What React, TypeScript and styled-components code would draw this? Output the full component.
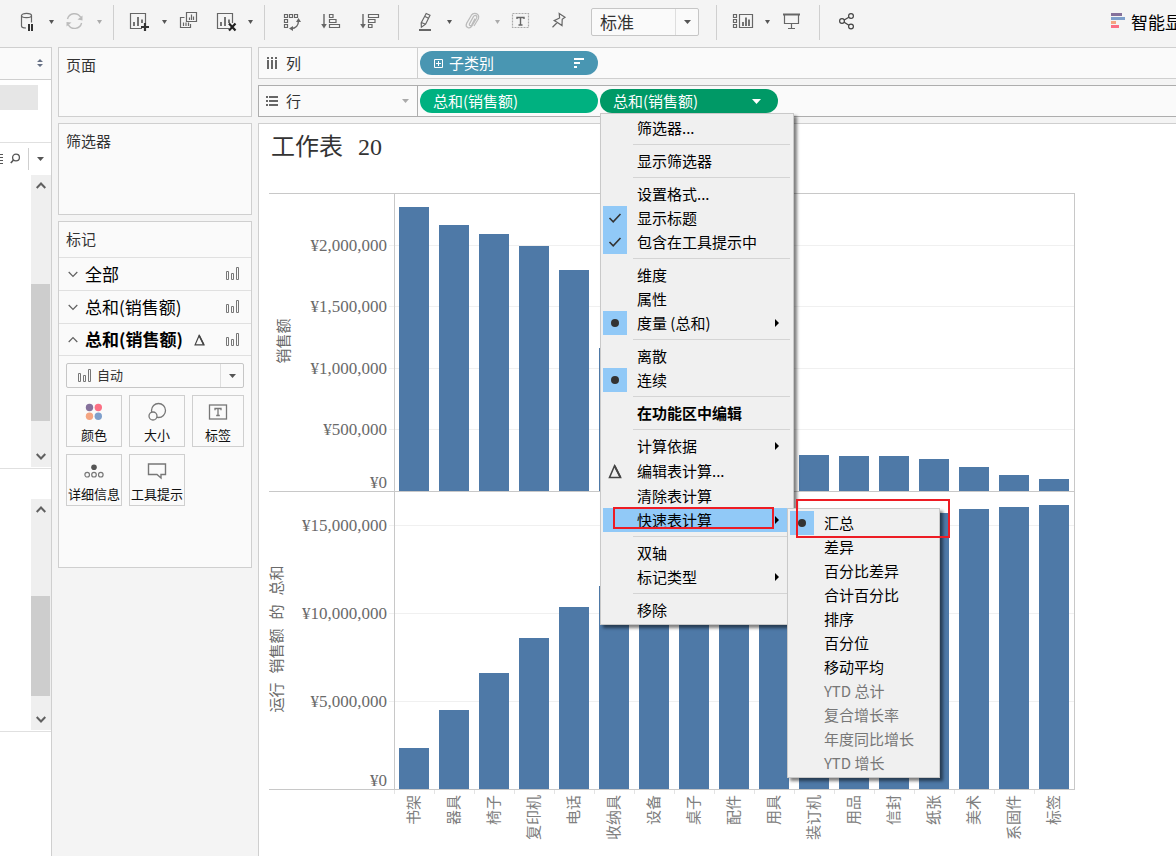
import React from "react";
import styled, { createGlobalStyle, css } from "styled-components";

const GlobalStyle = createGlobalStyle`
  * { box-sizing: border-box; }
  body {
    margin: 0;
    background: #f4f4f4;
    color: #333;
    font-family: "Noto Sans CJK SC", "Noto Sans", sans-serif;
    font-size: 15px;
  }
  button { font: inherit; color: inherit; background: none; border: 0; padding: 0; margin: 0; }
  svg { display: block; flex: none; }
`;

const Page = styled.div`
  display: flex;
  flex-direction: column;
  min-height: 100vh;
  overflow: hidden;
`;

/* ---------- Toolbar ---------- */

const Toolbar = styled.header`
  display: flex;
  align-items: center;
  height: 47px;
  padding: 0 0 3px 8px;
  overflow: hidden;
  white-space: nowrap;
`;

const ToolGroup = styled.div<{ $slot?: number }>`
  display: flex;
  align-items: center;
  flex: none;
  --slot: ${(p) => p.$slot ?? 38}px;
`;

const Tool = styled.button`
  display: grid;
  place-items: center;
  width: var(--slot);
  height: 28px;
`;

const CaretTool = styled.button`
  display: grid;
  place-items: center;
  width: 10px;
  height: 28px;
`;

const Separator = styled.div`
  flex: none;
  width: 1px;
  height: 35px;
  margin: 0 7px 0 9px;
  background: #cfcfcf;
`;

const SelectBox = styled.div<{ $arrow: number }>`
  position: relative;
  display: flex;
  background: #fafafa;
  border: 1px solid #c6c6c6;
  border-radius: 2px;
  select {
    appearance: none;
    width: 100%;
    border: 0;
    outline: 0;
    background: transparent;
    color: #333;
    font: inherit;
  }
  &::after {
    content: "";
    position: absolute;
    right: ${(p) => p.$arrow}px;
    top: 0;
    bottom: 0;
    border-left: 1px solid #dedede;
  }
  > svg {
    position: absolute;
    pointer-events: none;
  }
  > svg:last-child {
    right: ${(p) => p.$arrow / 2 - 4}px;
    top: 50%;
    margin-top: -2px;
  }
`;

const FitSelect = styled(SelectBox)`
  flex: none;
  width: 108px;
  height: 28px;
  margin: 0 8px 0 13px;
  font-size: 17px;
  select { padding: 0 24px 2px 8px; }
`;

const ShowMe = styled.button`
  display: flex;
  align-items: center;
  gap: 6px;
  flex: none;
  margin-left: 246px;
  padding-bottom: 2px;
  font-size: 17px;
  color: #000;
`;

const Caret = ({ color = "#555", w = 7 }: { color?: string; w?: number }) => (
  <svg width={w} height="4" viewBox="0 0 8 4" preserveAspectRatio="none">
    <path d="M0 0H8L4 4Z" fill={color} />
  </svg>
);

const Icon = ({ children, color = "#666" }: { children: React.ReactNode; color?: string }) => (
  <svg width="24" height="24" viewBox="0 0 24 24" fill="none" stroke={color} strokeWidth="1.2">
    {children}
  </svg>
);

const DataSourceIcon = () => (
  <Icon>
    <ellipse cx="11.5" cy="5.5" rx="5" ry="2.2" />
    <path d="M6.5 5.5V16C6.5 17.4 8.5 18 11 18M16.5 5.5V12.5" />
    <path d="M14 14V21M17 14V21" stroke="#333" strokeWidth="2" />
  </Icon>
);

const RefreshIcon = () => (
  <Icon color="#bbb">
    <path d="M4.5 9A7.2 7.2 0 0 1 17.6 7.2M18.6 13A7.2 7.2 0 0 1 5.4 14.8" strokeWidth="1.4" />
    <path d="M19.5 5.5V10.5L14.5 9.5ZM3.5 16.5V12L8.5 12.5Z" fill="#bbb" stroke="none" />
  </Icon>
);

const SheetFrame = () => (
  <>
    <path d="M14 18.5H2.5V3.5H17.5V13" />
    <path d="M6 16V12M10 16V7M14 13V9.5" strokeWidth="1.8" />
  </>
);

const NewSheetIcon = () => (
  <Icon>
    <SheetFrame />
    <path d="M17 13V21M13 17H21" stroke="#333" strokeWidth="2.2" />
  </Icon>
);

const ClearSheetIcon = () => (
  <Icon>
    <g transform="translate(1 0)"><SheetFrame /></g>
    <path d="M15 13.5L21.5 20.5M21.5 13.5L15 20.5" stroke="#222" strokeWidth="2.2" />
  </Icon>
);

const DuplicateIcon = () => (
  <Icon>
    <path d="M10.5 2.5H20.5V11.5H10.5Z" />
    <path d="M8.5 7.5H4.5V17.5H14.5V14" />
    <path d="M13.5 10V7.5M15.5 10V4.5M17.5 10V6.5M7.5 16V12.5M10 16V12.5M12.5 16V12.5" />
  </Icon>
);

const SwapIcon = () => (
  <Icon>
    <path d="M4.5 4.5H7.5V7.5H4.5ZM9.5 4.5H12.5V7.5H9.5ZM14.5 4.5H17.5V7.5H14.5ZM4.5 9.5H7.5V12.5H4.5ZM4.5 14.5H7.5V17.5H4.5Z" />
    <path d="M18.5 10.5C18.5 15 16 18.5 11 18.5" strokeWidth="1.4" />
    <path d="M18.5 8L21 12H16ZM9 18.5L13 16V21Z" fill="#666" stroke="none" />
  </Icon>
);

const SortArrow = () => (
  <>
    <path d="M5 4V16" strokeWidth="1.4" />
    <path d="M2.2 14H7.8L5 18.5Z" fill="#666" stroke="none" />
  </>
);

const SortAscIcon = () => (
  <Icon>
    <SortArrow />
    <path d="M10.5 4.5H14V7.5H10.5ZM10.5 9.5H17V12.5H10.5ZM10.5 14.5H20.5V17.5H10.5Z" />
  </Icon>
);

const SortDescIcon = () => (
  <Icon>
    <SortArrow />
    <path d="M10.5 4.5H20.5V7.5H10.5ZM10.5 9.5H17V12.5H10.5ZM10.5 14.5H14V17.5H10.5Z" />
  </Icon>
);

const HighlightIcon = () => (
  <Icon>
    <path d="M13.2 3.5L17 5.2L12.6 14.2L8.4 17.2L8.2 12.8ZM12 6.5L15.6 8.2M8.3 12.5L12.6 14.3" />
    <path d="M6 20H18" strokeWidth="2" />
  </Icon>
);

const ClipIcon = () => (
  <Icon color="#bbb">
    <path d="M8.6 13.6L12.4 6.6C13.8 4.2 16.8 5.8 15.6 8.2L10.8 16.2C8.6 19.6 3.8 17.2 5.6 13.4L10.4 5.2C12.6 1.8 19 3.2 17.4 8.8L13 16M8.6 13.6C7.6 15.6 9.8 16.4 10.8 14.8L14 8.6" />
  </Icon>
);

const TextBoxIcon = () => (
  <Icon>
    <rect x="3.5" y="3.5" width="16" height="14" stroke="#aaa" strokeDasharray="2 1" />
    <path d="M8 9V7.5H15V9M11.5 7.5V15M9.5 15H13.5" strokeWidth="1.4" />
  </Icon>
);

const PinIcon = () => (
  <Icon>
    <path d="M12.2 3.5L18 7.2L15.2 9.2L15 15.6L11.2 13L7.2 10.6L12.6 8ZM10 12.8L5.5 17.2" />
  </Icon>
);

const CardsIcon = () => (
  <Icon>
    <path d="M2.5 4.5H5.5V7.5H2.5ZM2.5 9.5H5.5V12.5H2.5ZM2.5 14.5H5.5V17.5H2.5ZM8.5 4.5H21.5V17.5H8.5Z" />
    <path d="M12 16V12M15 16V7.5M18 16V9.5" strokeWidth="1.8" />
  </Icon>
);

const PresentIcon = () => (
  <Icon>
    <path d="M4 4.5H21" strokeWidth="2" />
    <path d="M5.5 5V13.5H19.5V5M12.5 13.5V18.5M9 18.5H16" />
  </Icon>
);

const ShareIcon = () => (
  <Icon color="#444">
    <circle cx="8" cy="11" r="2.4" />
    <circle cx="17" cy="6" r="2.4" />
    <circle cx="17" cy="16.5" r="2.4" />
    <path d="M10.2 9.9L14.8 7.2M10.2 12.2L14.9 15.2" />
  </Icon>
);

const ShowMeIcon = () => (
  <svg width="14" height="16" viewBox="0 0 14 16">
    <path d="M0 0H11V3H0Z" fill="#85719b" />
    <path d="M0 4H14V7H0Z" fill="#7e9fcb" />
    <path d="M0 8H5V11H0Z" fill="#f4a582" />
    <path d="M0 12H8V15H0Z" fill="#fb6f84" />
  </svg>
);

/* ---------- Data pane ---------- */

const Workspace = styled.div`
  display: flex;
  flex: 1;
`;

const DataPane = styled.aside`
  flex: none;
  display: flex;
  flex-direction: column;
  width: 52px;
  background: #fff;
  border-top: 1px solid #cfcfcf;
  border-right: 1px solid #cfcfcf;
`;

const PaneHeader = styled.div`
  display: flex;
  align-items: center;
  justify-content: flex-end;
  height: 32px;
  padding: 0 8px 2px 0;
  background: #fafafa;
  border-bottom: 1px solid #cfcfcf;
`;

const SourceList = styled.div`
  height: 63px;
  padding: 5px 13px 0 0;
  border-bottom: 1px solid #e0e0e0;
  div { height: 25px; background: #e6e6e6; }
`;

const SearchRow = styled.div`
  display: flex;
  align-items: center;
  height: 32px;
  gap: 8px;
  span { width: 1px; height: 22px; background: #cfcfcf; }
`;

const ScrollTrack = styled.div<{ $h: number }>`
  display: flex;
  flex-direction: column;
  align-items: stretch;
  width: 20px;
  height: ${(p) => p.$h}px;
  margin-left: 31px;
  padding-bottom: 1px;
  background: #efefef;
  button { display: grid; place-items: center; flex: none; height: 20px; }
`;

const Thumb = styled.div<{ $before: number; $h: number }>`
  height: ${(p) => p.$h}px;
  margin: ${(p) => p.$before}px 1px auto 0;
  background: #cdcdcd;
`;

const Rule = styled.div<{ $after?: number }>`
  height: 1px;
  margin: 1px 0 ${(p) => p.$after ?? 0}px;
  background: #e0e0e0;
`;

const Chevron = ({ up, size = 10, width = 2, color = "#606060" }: { up?: boolean; size?: number; width?: number; color?: string }) => (
  <svg width={size} height="7" viewBox="0 0 10 7" preserveAspectRatio="none">
    <path d={up ? "M0.7 6L5 1.5L9.3 6" : "M0.7 1L5 5.5L9.3 1"} fill="none" stroke={color} strokeWidth={width} />
  </svg>
);

/* ---------- Cards ---------- */

const Cards = styled.section`
  flex: none;
  display: flex;
  flex-direction: column;
  gap: 6px;
  width: 206px;
  padding: 0 6px;
`;

const Card = styled.div<{ $h: number }>`
  height: ${(p) => p.$h}px;
  background: #fafafa;
  border: 1px solid #cfcfcf;
`;

const CardTitle = styled.h2`
  margin: 0;
  padding: 0 7px 2px;
  font-size: 15px;
  font-weight: 400;
  line-height: 33px;
`;

const MarkRow = styled.button<{ $bold?: boolean }>`
  display: flex;
  align-items: center;
  gap: 7px;
  width: 100%;
  height: ${(p) => (p.$bold ? 32 : 33)}px;
  padding: 0 11px 0 9px;
  border-top: 1px solid #e0e0e0;
  font-size: 17px;
  font-weight: ${(p) => (p.$bold ? 700 : 400)};
  color: #000;
  white-space: nowrap;
  > span { padding: 0 4px 2px 0; }
  > svg:last-child { margin-left: auto; }
`;

const MarkBody = styled.div`
  border-top: 1px solid #e0e0e0;
  padding: 7px;
`;

const MarkSelect = styled(SelectBox)`
  height: 25px;
  font-size: 13px;
  select { padding: 0 24px 2px 30px; }
  > svg:first-child { left: 11px; top: 5px; }
`;

const MarkGrid = styled.div`
  display: grid;
  grid-template-columns: 56px 56px 52px;
  gap: 7px;
  margin-top: 7px;
`;

const MarkButton = styled.button`
  display: flex;
  flex-direction: column;
  align-items: center;
  justify-content: space-between;
  height: 52px;
  padding: 6px 0 2px;
  border: 1px solid #cfcfcf;
  font-size: 13px;
  line-height: 18px;
  color: #111;
  white-space: nowrap;
`;

const BarsIcon = () => (
  <svg width="14" height="14" viewBox="0 0 14 14" fill="none" stroke="#777">
    <path d="M0.5 4.5H2.5V12.5H0.5ZM5.5 6.5H7.5V12.5H5.5ZM10.5 0.5H12.5V12.5H10.5Z" />
  </svg>
);

const Delta = ({ size = 10 }: { size?: number }) => (
  <svg width={size} height={size + 1} viewBox="0 0 12 13">
    <path d="M5.6 1.5L1.2 11.8H10.8Z" fill="none" stroke="#444" strokeWidth="1.3" />
    <path d="M5.6 1.5L10.8 11.8" stroke="#444" strokeWidth="1.7" />
  </svg>
);

const ColorIcon = () => (
  <svg width="20" height="20" viewBox="0 0 20 20">
    <circle cx="5.5" cy="5.5" r="3.7" fill="#85719b" />
    <circle cx="14.3" cy="5.5" r="3.7" fill="#fb6f84" />
    <circle cx="5.5" cy="14.3" r="3.7" fill="#f4a582" />
    <circle cx="14.3" cy="14.3" r="3.7" fill="#7e9fcb" />
  </svg>
);

const SizeIcon = () => (
  <svg width="20" height="20" viewBox="0 0 20 20" fill="#fafafa" stroke="#777" strokeWidth="1.3">
    <circle cx="11.5" cy="8.5" r="7" />
    <circle cx="6" cy="14" r="4" />
  </svg>
);

const LabelIcon = () => (
  <svg width="20" height="20" viewBox="0 0 20 20" fill="none" stroke="#777" strokeWidth="1.3">
    <rect x="1.5" y="3" width="17" height="14" />
    <path d="M7 8.2V6.5H13V8.2M10 6.5V13.5M8.2 13.5H11.8" />
  </svg>
);

const DetailIcon = () => (
  <svg width="20" height="20" viewBox="0 0 20 20" fill="none" stroke="#777" strokeWidth="1.2">
    <circle cx="10" cy="6.3" r="2.8" fill="#555" stroke="none" />
    <circle cx="3.2" cy="13.7" r="2.3" />
    <circle cx="10" cy="13.7" r="2.3" />
    <circle cx="16.8" cy="13.7" r="2.3" />
  </svg>
);

const TooltipIcon = () => (
  <svg width="20" height="20" viewBox="0 0 20 20" fill="none" stroke="#777" strokeWidth="1.4">
    <path d="M1.5 3H18.5V13.5H14V17L10 13.5H1.5Z" />
  </svg>
);

/* ---------- Shelves ---------- */

const Main = styled.main`
  flex: 1;
  min-width: 0;
  display: flex;
  flex-direction: column;
`;

const Shelf = styled.div<{ $active?: boolean }>`
  --line: ${(p) => (p.$active ? "#adadad" : "#cfcfcf")};
  display: flex;
  align-items: center;
  height: 32px;
  margin-bottom: 6px;
  background: #fafafa;
  border: 1px solid var(--line);
  border-right: 0;
`;

const ShelfLabel = styled.div`
  display: flex;
  align-items: center;
  align-self: stretch;
  gap: 8px;
  width: 159px;
  padding: 0 8px 0 7px;
  border-right: 1px solid var(--line);
  > span { padding-bottom: 2px; }
  > svg:nth-of-type(2) { margin-left: auto; }
`;

const PillSlot = styled.div`
  position: relative;
  margin-left: 2px;
`;

const Pill = styled.button<{ $color: string; $pad: number }>`
  display: flex;
  align-items: center;
  gap: 6px;
  width: 178px;
  height: 24px;
  padding: 0 14px 0 ${(p) => p.$pad}px;
  border-radius: 12px;
  background: ${(p) => p.$color};
  color: #fff;
  font-size: 15px;
  line-height: 22px;
  white-space: nowrap;
  span { flex: 1; text-align: left; }
`;

const ColumnsIcon = () => (
  <svg width="12" height="13" viewBox="0 0 12 13" fill="#666">
    <path d="M1 0H3V2H1ZM5 0H7V2H5ZM9 0H11V2H9ZM1 3H3V12H1ZM5 3H7V12H5ZM9 3H11V12H9Z" />
  </svg>
);

const RowsIcon = () => (
  <svg width="12" height="12" viewBox="0 0 12 12" fill="#666">
    <path d="M0 1H2V3H0ZM0 5H2V7H0ZM0 9H2V11H0ZM3 1H12V3H3ZM3 5H12V7H3ZM3 9H12V11H3Z" />
  </svg>
);

/* ---------- Menus ---------- */

const menuFrame = css`
  position: absolute;
  margin: 0;
  padding: 2px;
  list-style: none;
  background: #f0f0f0;
  border: 1px solid #c9c9c9;
  box-shadow: 3px 3px 3px rgba(0, 0, 0, 0.5);
  color: #000;
  font-size: 15px;
`;

const Menu = styled.ul`
  ${menuFrame}
  top: 100%;
  left: 0;
  z-index: 5;
  width: 194px;
`;

const SubMenu = styled.ul`
  ${menuFrame}
  top: 0;
  left: 184px;
  width: 153px;
`;

const MenuItem = styled.li<{ $tall?: boolean; $selected?: boolean }>`
  position: relative;
  height: ${(p) => (p.$tall ? 26 : 24)}px;
  background: ${(p) => (p.$selected ? "#91c9f7" : "none")};
`;

const MenuButton = styled.button<{ $bold?: boolean }>`
  display: flex;
  align-items: center;
  gap: 10px;
  width: 100%;
  height: 100%;
  padding-right: 12px;
  font-weight: ${(p) => (p.$bold ? 700 : 400)};
  line-height: 22px;
  white-space: nowrap;
  &:disabled { color: #777; }
  > svg { margin-left: auto; }
`;

const Gutter = styled.span<{ $on?: boolean }>`
  display: grid;
  place-items: center;
  flex: none;
  width: 24px;
  height: 24px;
  background: ${(p) => (p.$on ? "#91c9f7" : "none")};
`;

const Divider = styled.li`
  height: 1px;
  margin: 4px 1px 4px 30px;
  background: #d4d4d4;
`;

const Marker = styled.div<{ $x: number; $y: number; $w: number; $h: number }>`
  position: absolute;
  z-index: 2;
  left: ${(p) => p.$x}px;
  top: ${(p) => p.$y}px;
  width: ${(p) => p.$w}px;
  height: ${(p) => p.$h}px;
  border: 2px solid #ed1c24;
  pointer-events: none;
`;

const Check = () => (
  <svg width="14" height="12" viewBox="0 0 14 12">
    <path d="M1.5 6L5.2 9.8L12.5 2" fill="none" stroke="#333" strokeWidth="1.6" />
  </svg>
);

const Dot = () => (
  <svg width="8" height="8" viewBox="0 0 8 8">
    <circle cx="4" cy="4" r="4" fill="#333" />
  </svg>
);

const SubArrow = () => (
  <svg width="4" height="8" viewBox="0 0 4 8">
    <path d="M0 0L4 4L0 8Z" fill="#000" />
  </svg>
);

type Entry = {
  label: string;
  mark?: "check" | "dot" | "delta";
  bold?: boolean;
  arrow?: boolean;
  open?: boolean;
  disabled?: boolean;
};

const menuGroups: Entry[][] = [
  [{ label: "筛选器..." }],
  [{ label: "显示筛选器" }],
  [{ label: "设置格式..." }, { label: "显示标题", mark: "check" }, { label: "包含在工具提示中", mark: "check" }],
  [{ label: "维度" }, { label: "属性" }, { label: "度量 (总和)", mark: "dot", arrow: true }],
  [{ label: "离散" }, { label: "连续", mark: "dot" }],
  [{ label: "在功能区中编辑", bold: true }],
  [
    { label: "计算依据", arrow: true },
    { label: "编辑表计算...", mark: "delta" },
    { label: "清除表计算" },
    { label: "快速表计算", arrow: true, open: true },
  ],
  [{ label: "双轴" }, { label: "标记类型", arrow: true }],
  [{ label: "移除" }],
];

const quickCalcs: Entry[] = [
  { label: "汇总", mark: "dot" },
  { label: "差异" },
  { label: "百分比差异" },
  { label: "合计百分比" },
  { label: "排序" },
  { label: "百分位" },
  { label: "移动平均" },
  { label: "YTD 总计", disabled: true },
  { label: "复合增长率", disabled: true },
  { label: "年度同比增长", disabled: true },
  { label: "YTD 增长", disabled: true },
];

const EntryButton = ({ entry }: { entry: Entry }) => (
  <MenuButton $bold={entry.bold} disabled={entry.disabled}>
    <Gutter $on={entry.mark === "check" || entry.mark === "dot"}>
      {entry.mark === "check" && <Check />}
      {entry.mark === "dot" && <Dot />}
      {entry.mark === "delta" && <Delta size={14} />}
    </Gutter>
    {entry.label}
    {entry.arrow && <SubArrow />}
  </MenuButton>
);

const QuickCalcMenu = () => (
  <SubMenu>
    {quickCalcs.map((entry, i) => (
      <MenuItem key={entry.label}>
        <EntryButton entry={entry} />
        {i === 0 && <Marker $x={6} $y={-12} $w={154} $h={39} />}
      </MenuItem>
    ))}
  </SubMenu>
);

const PillMenu = () => (
  <Menu>
    {menuGroups.map((group, g) => (
      <React.Fragment key={g}>
        {g > 0 && <Divider />}
        {group.map((entry) => (
          <MenuItem key={entry.label} $tall={entry.mark === "delta"} $selected={entry.open}>
            <EntryButton entry={entry} />
            {entry.open && <Marker $x={10} $y={-1} $w={161} $h={22} />}
            {entry.open && <QuickCalcMenu />}
          </MenuItem>
        ))}
      </React.Fragment>
    ))}
  </Menu>
);

/* ---------- Worksheet ---------- */

const Sheet = styled.section`
  flex: 1;
  padding: 7px 0 0 10px;
  background: #fff;
  border-top: 1px solid #cfcfcf;
  border-left: 1px solid #cfcfcf;
`;

const SheetTitle = styled.h1`
  display: flex;
  gap: 15px;
  margin: 0 0 30px;
  padding-left: 2px;
  font: 400 24px/32px "Liberation Serif", "Noto Sans CJK SC", serif;
`;

const ChartSvg = styled.svg`
  overflow: visible;
  .tick { font: 17px "Liberation Serif", serif; fill: #6a6a6a; text-anchor: end; }
  .axis { font: 15px "Liberation Mono", "Noto Sans CJK SC", monospace; fill: #6a6a6a; text-anchor: middle; }
  .category { font: 15px "Noto Sans CJK SC", sans-serif; fill: #808080; text-anchor: end; }
`;

const sales: [string, number][] = [
  ["书架", 2.309], ["器具", 2.163], ["椅子", 2.092], ["复印机", 1.992], ["电话", 1.799],
  ["收纳具", 1.163], ["设备", 0.95], ["桌子", 0.87], ["配件", 0.81], ["用具", 0.43],
  ["装订机", 0.293], ["用品", 0.285], ["信封", 0.285], ["纸张", 0.26], ["美术", 0.195],
  ["系固件", 0.13], ["标签", 0.098],
];

const running = sales.map((_, i) => sales.slice(0, i + 1).reduce((sum, [, v]) => sum + v, 0));

const PLOT_X = 125;
const STEP = 40;
const PLOT_END = PLOT_X + STEP * sales.length;

type PaneProps = {
  base: number;
  perMillion: number;
  values: number[];
  ticks: [number, string][];
};

const Pane = ({ base, perMillion, values, ticks }: PaneProps) => (
  <g>
    {ticks.map(([value, label]) => {
      const y = base - Math.round(value * perMillion);
      return (
        <g key={label}>
          {value > 0 && <path d={`M${PLOT_X - 5} ${y + 0.5}H${PLOT_END}`} stroke="#f0f0f0" />}
          <text className="tick" x="118" y={value > 0 ? y + 6 : y - 3}>{label}</text>
        </g>
      );
    })}
    {values.map((value, i) => {
      const h = Math.round(value * perMillion);
      return <rect key={i} x={PLOT_X + 5 + i * STEP} y={base - h} width="30" height={h} fill="#4e79a7" />;
    })}
  </g>
);

const Chart = () => (
  <ChartSvg width="808" height="655">
    <Pane
      base={298}
      perMillion={123}
      values={sales.map(([, v]) => v)}
      ticks={[[2, "¥2,000,000"], [1.5, "¥1,500,000"], [1, "¥1,000,000"], [0.5, "¥500,000"], [0, "¥0"]]}
    />
    <Pane
      base={596}
      perMillion={17.6}
      values={running}
      ticks={[[15, "¥15,000,000"], [10, "¥10,000,000"], [5, "¥5,000,000"], [0, "¥0"]]}
    />
    <path
      d={`M0 0.5H${PLOT_END}M0 298.5H${PLOT_END}M0 596.5H${PLOT_END}M${PLOT_X + 0.5} 0V597M${PLOT_END + 0.5} 0V597`}
      stroke="#c8c8c8"
      fill="none"
    />
    <text className="axis" transform="translate(20 148) rotate(-90)">销售额</text>
    <text className="axis" transform="translate(13 446) rotate(-90)">运行 销售额 的 总和</text>
    {sales.map(([name], i) => (
      <g key={name}>
        <path d={`M${PLOT_X + i * STEP + 0.5} 597V601`} stroke="#e4e4e4" />
        <text className="category" transform={`translate(${PLOT_X + i * STEP + 25} 602) rotate(-90)`}>{name}</text>
      </g>
    ))}
  </ChartSvg>
);

/* ---------- App ---------- */

export default function App() {
  return (
    <Page>
      <GlobalStyle />
      <Toolbar>
        <ToolGroup>
          <Tool aria-label="数据源"><DataSourceIcon /></Tool>
          <CaretTool aria-label="数据源选项"><Caret w={5} /></CaretTool>
          <Tool aria-label="刷新" disabled><RefreshIcon /></Tool>
          <CaretTool aria-label="刷新选项" disabled><Caret w={5} color="#aaa" /></CaretTool>
        </ToolGroup>
        <Separator />
        <ToolGroup>
          <Tool aria-label="新建工作表"><NewSheetIcon /></Tool>
          <CaretTool aria-label="新建选项"><Caret w={5} /></CaretTool>
          <Tool aria-label="复制"><DuplicateIcon /></Tool>
          <Tool aria-label="清除"><ClearSheetIcon /></Tool>
          <CaretTool aria-label="清除选项"><Caret w={5} /></CaretTool>
        </ToolGroup>
        <Separator />
        <ToolGroup $slot={39}>
          <Tool aria-label="交换行和列"><SwapIcon /></Tool>
          <Tool aria-label="升序"><SortAscIcon /></Tool>
          <Tool aria-label="降序"><SortDescIcon /></Tool>
        </ToolGroup>
        <Separator />
        <ToolGroup>
          <Tool aria-label="突出显示"><HighlightIcon /></Tool>
          <CaretTool aria-label="突出显示选项"><Caret w={5} /></CaretTool>
          <Tool aria-label="组" disabled><ClipIcon /></Tool>
          <CaretTool aria-label="组选项" disabled><Caret w={5} color="#aaa" /></CaretTool>
          <Tool aria-label="显示标签"><TextBoxIcon /></Tool>
          <Tool aria-label="固定"><PinIcon /></Tool>
        </ToolGroup>
        <FitSelect $arrow={22}>
          <select aria-label="适合"><option>标准</option></select>
          <Caret />
        </FitSelect>
        <Separator />
        <ToolGroup>
          <Tool aria-label="显示卡"><CardsIcon /></Tool>
          <CaretTool aria-label="显示卡选项"><Caret w={5} /></CaretTool>
          <Tool aria-label="演示模式"><PresentIcon /></Tool>
        </ToolGroup>
        <Separator />
        <ToolGroup>
          <Tool aria-label="共享"><ShareIcon /></Tool>
        </ToolGroup>
        <ShowMe><ShowMeIcon />智能显</ShowMe>
      </Toolbar>

      <Workspace>
        <DataPane>
          <PaneHeader>
            <svg width="6" height="8" viewBox="0 0 6 8" fill="#667085">
              <path d="M0 3L3 0L6 3ZM0 5L3 8L6 5Z" />
            </svg>
          </PaneHeader>
          <SourceList><div /></SourceList>
          <SearchRow>
            <svg width="20" height="12" viewBox="0 0 20 12" fill="none" stroke="#555">
              <path d="M0 1.5H3M0 4.5H3M0 7.5H3M0 10.5H3" />
              <circle cx="16" cy="4.5" r="3.4" strokeWidth="1.3" />
              <path d="M13.5 7L10.8 10" strokeWidth="1.6" />
            </svg>
            <span />
            <Caret w={7} />
          </SearchRow>
          <ScrollTrack $h={292}>
            <button aria-label="向上滚动"><Chevron up /></button>
            <Thumb $before={89} $h={137} />
            <button aria-label="向下滚动"><Chevron /></button>
          </ScrollTrack>
          <Rule $after={30} />
          <ScrollTrack $h={231}>
            <button aria-label="向上滚动"><Chevron up /></button>
            <Thumb $before={77} $h={100} />
            <button aria-label="向下滚动"><Chevron /></button>
          </ScrollTrack>
          <Rule />
        </DataPane>

        <Cards>
          <Card $h={70}><CardTitle>页面</CardTitle></Card>
          <Card $h={92}><CardTitle>筛选器</CardTitle></Card>
          <Card $h={347}>
            <CardTitle>标记</CardTitle>
            <MarkRow><Chevron width={1.2} /><span>全部</span><BarsIcon /></MarkRow>
            <MarkRow><Chevron width={1.2} /><span>总和(销售额)</span><BarsIcon /></MarkRow>
            <MarkRow $bold><Chevron up width={1.2} /><span>总和(销售额)</span><Delta size={11} /><BarsIcon /></MarkRow>
            <MarkBody>
              <MarkSelect $arrow={22}>
                <BarsIcon />
                <select aria-label="标记类型"><option>自动</option></select>
                <Caret />
              </MarkSelect>
              <MarkGrid>
                <MarkButton><ColorIcon />颜色</MarkButton>
                <MarkButton><SizeIcon />大小</MarkButton>
                <MarkButton><LabelIcon />标签</MarkButton>
                <MarkButton><DetailIcon />详细信息</MarkButton>
                <MarkButton><TooltipIcon />工具提示</MarkButton>
              </MarkGrid>
            </MarkBody>
          </Card>
        </Cards>

        <Main>
          <Shelf>
            <ShelfLabel><ColumnsIcon /><span>列</span></ShelfLabel>
            <PillSlot>
              <Pill $color="#4996b2" $pad={14}>
                <svg width="9" height="9" viewBox="0 0 9 9" fill="none" stroke="#fff">
                  <path d="M0.5 0.5H8.5V8.5H0.5ZM2 4.5H7M4.5 2V7" />
                </svg>
                <span>子类别</span>
                <svg width="11" height="10" viewBox="0 0 11 10" fill="#fff">
                  <path d="M1 0H11V2H1ZM1 4H7V6H1ZM1 8H4V10H1Z" />
                </svg>
              </Pill>
            </PillSlot>
          </Shelf>
          <Shelf $active>
            <ShelfLabel><RowsIcon /><span>行</span><Caret color="#aaa" /></ShelfLabel>
            <PillSlot>
              <Pill $color="#00b180" $pad={13}><span>总和(销售额)</span></Pill>
            </PillSlot>
            <PillSlot>
              <Pill $color="#009966" $pad={13}>
                <span>总和(销售额)</span>
                <svg width="12" height="5" viewBox="0 0 12 5"><path d="M0 0H9L4.5 5Z" fill="#fff" /></svg>
              </Pill>
              <PillMenu />
            </PillSlot>
          </Shelf>
          <Sheet>
            <SheetTitle><span>工作表</span> <span>20</span></SheetTitle>
            <Chart />
          </Sheet>
        </Main>
      </Workspace>
    </Page>
  );
}
